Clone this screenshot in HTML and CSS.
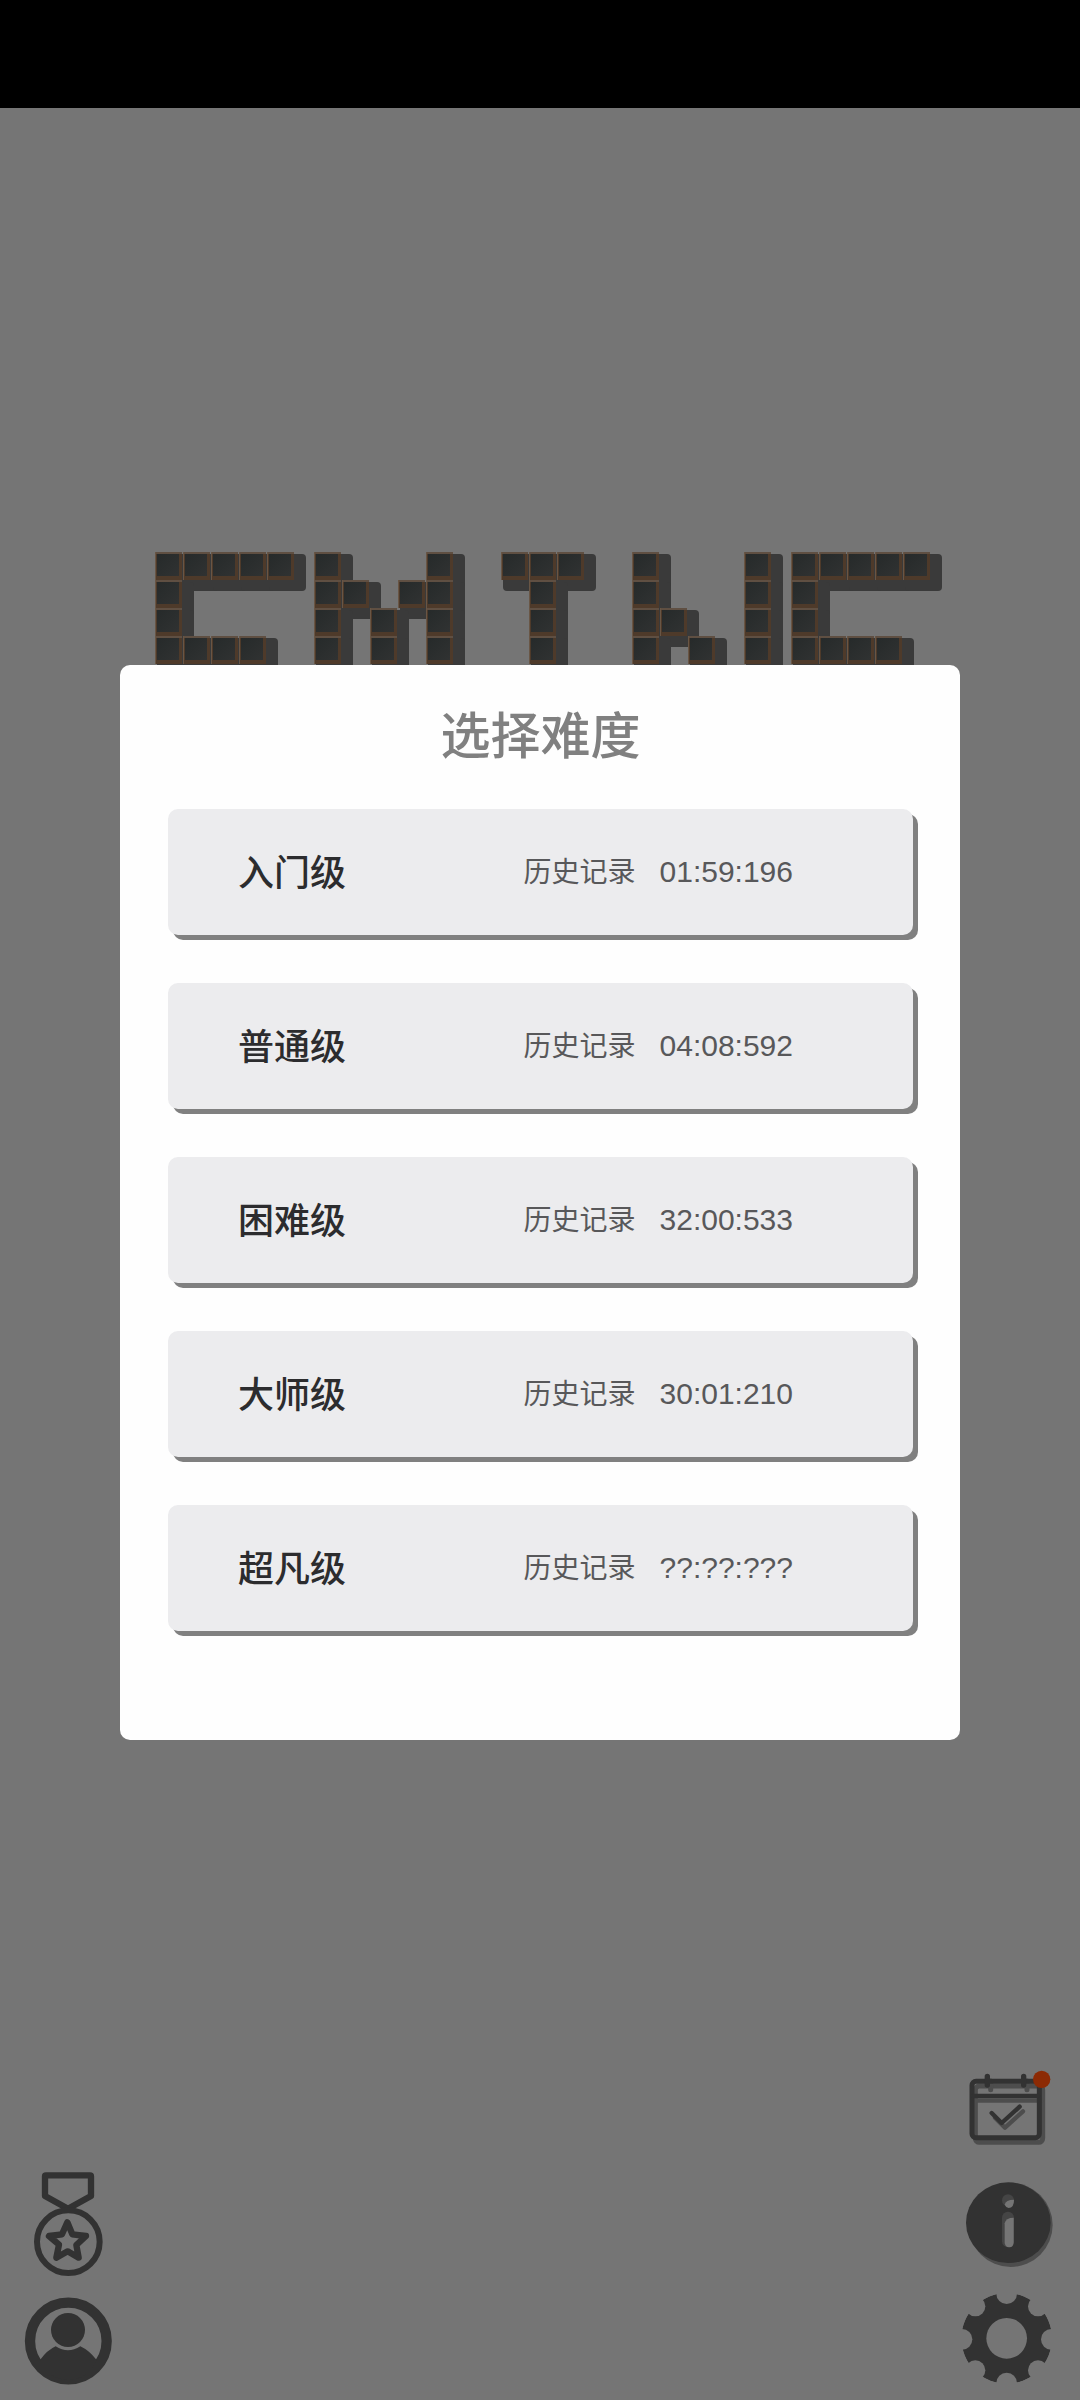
FILE: index.html
```html
<!DOCTYPE html>
<html lang="zh-CN">
<head>
    <meta charset="UTF-8">
    <meta name="viewport" content="width=device-width, initial-scale=1.0">
    <title>选择难度</title>
    <link rel="stylesheet" href="styles.css">
</head>
<body>
    <div class="status-bar"></div>

    <div class="home">
        <svg class="logo" id="logo" width="790" height="125" viewBox="0 0 790 125" aria-hidden="true">
            <defs>
                <linearGradient id="stone" x1="0" y1="0" x2="1" y2="1">
                    <stop offset="0" stop-color="#262a2a"/>
                    <stop offset="1" stop-color="#303232"/>
                </linearGradient>
                <g id="tile">
                    <rect x="0" y="-1" width="27" height="28" fill="#4e3a2a"/>
                    <rect x="0" y="-1" width="27" height="2" fill="#5f4f42"/>
                    <rect x="0" y="-1" width="1" height="28" fill="#695645"/>
                    <rect x="2" y="1" width="22" height="22" fill="url(#stone)"/>
                </g>
            </defs>
            <g id="shadows" fill="#3a3a3a"></g>
            <g id="tiles"></g>
        </svg>

        <div class="toolbar">
            <div class="tools">
                <button class="tool" aria-label="成就">
                    <svg width="100" height="110" viewBox="30 15 300 330" fill="none" stroke="#323232" stroke-linejoin="round">
                        <path d="M108 46H240Q243 46 243 49V108L174 146L105 108V49Q105 46 108 46Z" stroke-width="19"/>
                        <circle cx="175" cy="245" r="94" stroke-width="18"/>
                        <path d="M172 187L187 223L228 228L199 255L206 293L173 274L139 293L147 254L117 228L156 223Z" stroke-width="19"/>
                    </svg>
                </button>
                <button class="tool" aria-label="用户">
                    <svg width="100" height="100" viewBox="30 405 300 300" fill="#323232">
                        <circle cx="175" cy="543" r="115" fill="none" stroke="#323232" stroke-width="31"/>
                        <circle cx="174" cy="510" r="51"/>
                        <path d="M90 600Q112 570 137 559Q174 583 211 559Q237 571 260 600Q235 657 175 660Q115 657 90 600Z"/>
                    </svg>
                </button>
            </div>

            <div class="tools">
                <button class="tool" aria-label="签到">
                    <svg width="100" height="90" viewBox="30 45 300 270" fill="none" stroke-linecap="round" stroke-linejoin="round">
                        <g stroke="#4d4d4d" transform="translate(10 14)">
                            <rect x="66" y="94" width="202" height="169" rx="12" stroke-width="15"/>
                            <path d="M70 138H264" stroke-width="13"/>
                            <path d="M112 79V105M221 79V105" stroke-width="15"/>
                            <path d="M125 189L155 219L209 170" stroke-width="13"/>
                        </g>
                        <g stroke="#323232">
                            <rect x="66" y="94" width="202" height="169" rx="12" stroke-width="15"/>
                            <path d="M70 138H264" stroke-width="13"/>
                            <path d="M112 79V105M221 79V105" stroke-width="16"/>
                            <path d="M125 189L155 219L209 170" stroke-width="13"/>
                        </g>
                        <circle cx="275" cy="88" r="26" fill="#8c2a04"/>
                    </svg>
                </button>
                <button class="tool" aria-label="信息">
                    <svg width="100" height="100" viewBox="30 45 300 300">
                        <circle cx="182" cy="195" r="126" fill="#4d4d4d"/>
                        <ellipse cx="175" cy="188" rx="127" ry="121" fill="#323232"/>
                        <circle cx="174" cy="121" r="18" fill="#454545"/>
                        <rect x="156" y="155" width="36" height="107" rx="18" fill="#454545"/>
                        <path d="M164 134Q167 119 192 119Q192 144 176 144Q167 142 164 134Z" fill="#757575"/>
                        <path d="M164 190Q167 173 191 173V247Q191 262 178 262Q164 262 164 247Z" fill="#757575"/>
                    </svg>
                </button>
                <button class="tool" aria-label="设置">
                    <svg width="100" height="100" viewBox="30 45 300 300">
                        <mask id="gear">
                            <circle cx="170" cy="175" r="136" fill="#fff"/>
                            <circle cx="170" cy="175" r="61"/>
                            <circle cx="304" cy="178" r="31"/>
                            <circle cx="36" cy="178" r="31"/>
                            <circle cx="170" cy="41" r="31"/>
                            <circle cx="170" cy="309" r="31"/>
                            <circle cx="264" cy="79" r="30"/>
                            <circle cx="76" cy="79" r="30"/>
                            <circle cx="264" cy="271" r="30"/>
                            <circle cx="76" cy="271" r="30"/>
                        </mask>
                        <circle cx="170" cy="175" r="136" fill="#323232" mask="url(#gear)"/>
                    </svg>
                </button>
            </div>
        </div>
    </div>

    <div class="overlay">
        <div class="dialog" role="dialog" aria-labelledby="title">
            <h2 id="title">选择难度</h2>
            <div class="levels">
                <button class="level">
                    <span class="name">入门级</span>
                    <span class="record">历史记录 <span class="time">01:59:196</span></span>
                </button>
                <button class="level">
                    <span class="name">普通级</span>
                    <span class="record">历史记录 <span class="time">04:08:592</span></span>
                </button>
                <button class="level">
                    <span class="name">困难级</span>
                    <span class="record">历史记录 <span class="time">32:00:533</span></span>
                </button>
                <button class="level">
                    <span class="name">大师级</span>
                    <span class="record">历史记录 <span class="time">30:01:210</span></span>
                </button>
                <button class="level">
                    <span class="name">超凡级</span>
                    <span class="record">历史记录 <span class="time">??:??:???</span></span>
                </button>
            </div>
        </div>
    </div>

    <script src="logo.js"></script>
</body>
</html>
```

FILE: styles.css
```css
* {
    box-sizing: border-box;
}
body {
    margin: 0;
    min-height: 100vh;
    display: flex;
    flex-direction: column;
    position: relative;
    background-color: #757575;
    font-family: "Liberation Sans", "Noto Sans CJK SC", sans-serif;
}
button {
    border: none;
    cursor: pointer;
    font-family: inherit;
}
.status-bar {
    height: 108px;
    background-color: #000;
}
.home {
    flex: 1;
    display: flex;
    flex-direction: column;
    align-items: center;
    padding-top: 445px;
}
.logo {
    max-width: 100%;
    overflow: visible;
}
.toolbar {
    width: 100%;
    margin-top: auto;
    padding: 0 20px 5px;
    display: flex;
    justify-content: space-between;
    align-items: flex-end;
}
.tools {
    display: flex;
    flex-direction: column;
    gap: 20px;
}
.tool {
    padding: 0;
    background: none;
}
.tool svg {
    display: block;
    overflow: visible;
}
/* dialog sits over the home screen */
.overlay {
    position: absolute;
    inset: 0;
    display: flex;
    align-items: center;
    justify-content: center;
    padding: 4px 120px 0;
}
.dialog {
    width: 100%;
    padding: 36px 47px 109px 48px;
    background-color: #fefefe;
    border-radius: 10px;
}
h2 {
    margin: 0 0 36px;
    color: #808080;
    font-size: 50px;
    font-weight: 500;
    line-height: 72px;
    text-align: center;
}
.levels {
    display: flex;
    flex-direction: column;
    gap: 48px;
}
.level {
    height: 126px;
    padding: 0 120px 4px 70px;
    display: flex;
    align-items: center;
    justify-content: space-between;
    background-color: #ececee;
    border-radius: 10px;
    box-shadow: 5px 5px 0 #808080;
}
.name {
    color: #2c2c2e;
    font-size: 36px;
    font-weight: 500;
}
.record {
    display: flex;
    align-items: center;
    gap: 24px;
    color: #58585a;
    font-size: 28px;
}
.time {
    padding-top: 4px;
    font-size: 30px;
}
```

FILE: logo.js
```js
const TILE = 28;

// one entry per letter: x position and its rows of tiles
const letters = [
    { x: 10, rows: ['#####', '#....', '#....', '####.'] },
    { x: 169, rows: ['#...#', '##.##', '#.#.#', '#.#.#'] },
    { x: 356, rows: ['###', '.#.', '.#.', '.#.'] },
    { x: 487, rows: ['#...#', '#...#', '##..#', '#.#.#'] },
    { x: 646, rows: ['#####', '#....', '#....', '####.'] }
];

let shadows = '';
let tiles = '';

letters.forEach(letter => {
    letter.rows.forEach((row, r) => {
        [...row].forEach((cell, c) => {
            if (cell !== '#') return;
            const x = letter.x + c * TILE;
            const y = r * TILE;
            shadows += `<rect x="${x + 2}" y="${y + 1}" width="37" height="37" rx="4"/>`;
            tiles += `<use href="#tile" x="${x}" y="${y}"/>`;
        });
    });
});

document.getElementById('shadows').innerHTML = shadows;
document.getElementById('tiles').innerHTML = tiles;
```
